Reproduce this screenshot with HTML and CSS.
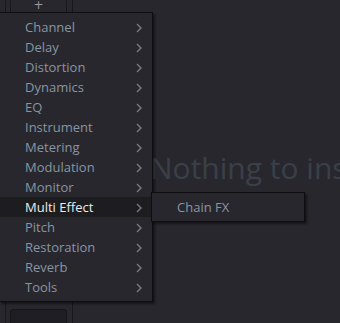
FILE: index.html
```html
<!DOCTYPE html>
<html>
<head>
<meta charset="utf-8">
<link rel="stylesheet" href="styles.css">
</head>
<body>
<div class="app">
  <div class="side">
    <div class="add-btn">+</div>
    <div class="side-fill"></div>
    <div class="slot"></div>
  </div>
  <div class="main">
    <div class="empty">Nothing to insert</div>
  </div>

  <div class="menu">
    <div class="item">Channel<svg class="chev" viewBox="0 0 6 10"><path d="M1 1l4 4-4 4"/></svg></div>
    <div class="item">Delay<svg class="chev" viewBox="0 0 6 10"><path d="M1 1l4 4-4 4"/></svg></div>
    <div class="item">Distortion<svg class="chev" viewBox="0 0 6 10"><path d="M1 1l4 4-4 4"/></svg></div>
    <div class="item">Dynamics<svg class="chev" viewBox="0 0 6 10"><path d="M1 1l4 4-4 4"/></svg></div>
    <div class="item">EQ<svg class="chev" viewBox="0 0 6 10"><path d="M1 1l4 4-4 4"/></svg></div>
    <div class="item">Instrument<svg class="chev" viewBox="0 0 6 10"><path d="M1 1l4 4-4 4"/></svg></div>
    <div class="item">Metering<svg class="chev" viewBox="0 0 6 10"><path d="M1 1l4 4-4 4"/></svg></div>
    <div class="item">Modulation<svg class="chev" viewBox="0 0 6 10"><path d="M1 1l4 4-4 4"/></svg></div>
    <div class="item">Monitor<svg class="chev" viewBox="0 0 6 10"><path d="M1 1l4 4-4 4"/></svg></div>
    <div class="item active">Multi Effect<svg class="chev" viewBox="0 0 6 10"><path d="M1 1l4 4-4 4"/></svg></div>
    <div class="item">Pitch<svg class="chev" viewBox="0 0 6 10"><path d="M1 1l4 4-4 4"/></svg></div>
    <div class="item">Restoration<svg class="chev" viewBox="0 0 6 10"><path d="M1 1l4 4-4 4"/></svg></div>
    <div class="item">Reverb<svg class="chev" viewBox="0 0 6 10"><path d="M1 1l4 4-4 4"/></svg></div>
    <div class="item">Tools<svg class="chev" viewBox="0 0 6 10"><path d="M1 1l4 4-4 4"/></svg></div>
  </div>

  <div class="submenu">
    <div class="item">Chain FX</div>
  </div>
</div>
</body>
</html>
```

FILE: styles.css
```css
html, body {
  margin: 0;
  padding: 0;
  background: #28272d;
  overflow: hidden;
}
body {
  font-family: "Open Sans", "Noto Sans", sans-serif;
  width: 340px;
  height: 323px;
}
.app {
  position: relative;
  width: 340px;
  height: 323px;
  display: flex;
}
.side {
  margin-left: 5px;
  width: 66px;
  height: 323px;
  border-left: 1px solid #18181b;
  border-right: 1px solid #18181b;
  display: flex;
  flex-direction: column;
  align-items: flex-start;
}
.add-btn {
  margin-left: 4px;
  width: 55px;
  height: 12px;
  border-left: 1px solid #18181b;
  border-right: 1px solid #18181b;
  color: #9a9aa0;
  font-size: 12px;
  line-height: 10px;
  text-align: center;
  font-family: "DejaVu Sans", sans-serif;
}
.side-fill {
  flex: 1;
}
.slot {
  margin-left: 4px;
  margin-bottom: -4px;
  width: 55px;
  height: 16px;
  border: 1px solid #151517;
  border-radius: 3px;
  background: #1f1f23;
}
.main {
  flex: 1;
  position: relative;
  overflow: hidden;
}
.empty {
  position: absolute;
  left: 77px;
  top: 147px;
  white-space: nowrap;
  font-size: 30px;
  color: #3a4049;
}
.menu {
  position: absolute;
  left: -1px;
  top: 12px;
  width: 152px;
  padding: 4px 0;
  background: #28272d;
  border: 1px solid #0e0e10;
  box-shadow: 2px 2px 2px rgba(0,0,0,0.45);
}
.item {
  height: 20px;
  line-height: 20px;
  padding-left: 25px;
  font-size: 13px;
  color: #8795a3;
  display: flex;
  align-items: center;
  position: relative;
}
.item.active {
  background: #1d1d20;
  color: #e8ecf0;
}
.chev {
  position: absolute;
  left: 136px;
  top: 6px;
  width: 6px;
  height: 10px;
  fill: none;
  stroke: #7b7b7f;
  stroke-width: 1.4;
}
.submenu {
  position: absolute;
  left: 151px;
  top: 192px;
  width: 152px;
  padding: 4px 0;
  background: #28272d;
  border: 1px solid #0e0e10;
  box-shadow: 2px 2px 2px rgba(0,0,0,0.45);
}
.submenu .item {
  padding-left: 25px;
}
```
